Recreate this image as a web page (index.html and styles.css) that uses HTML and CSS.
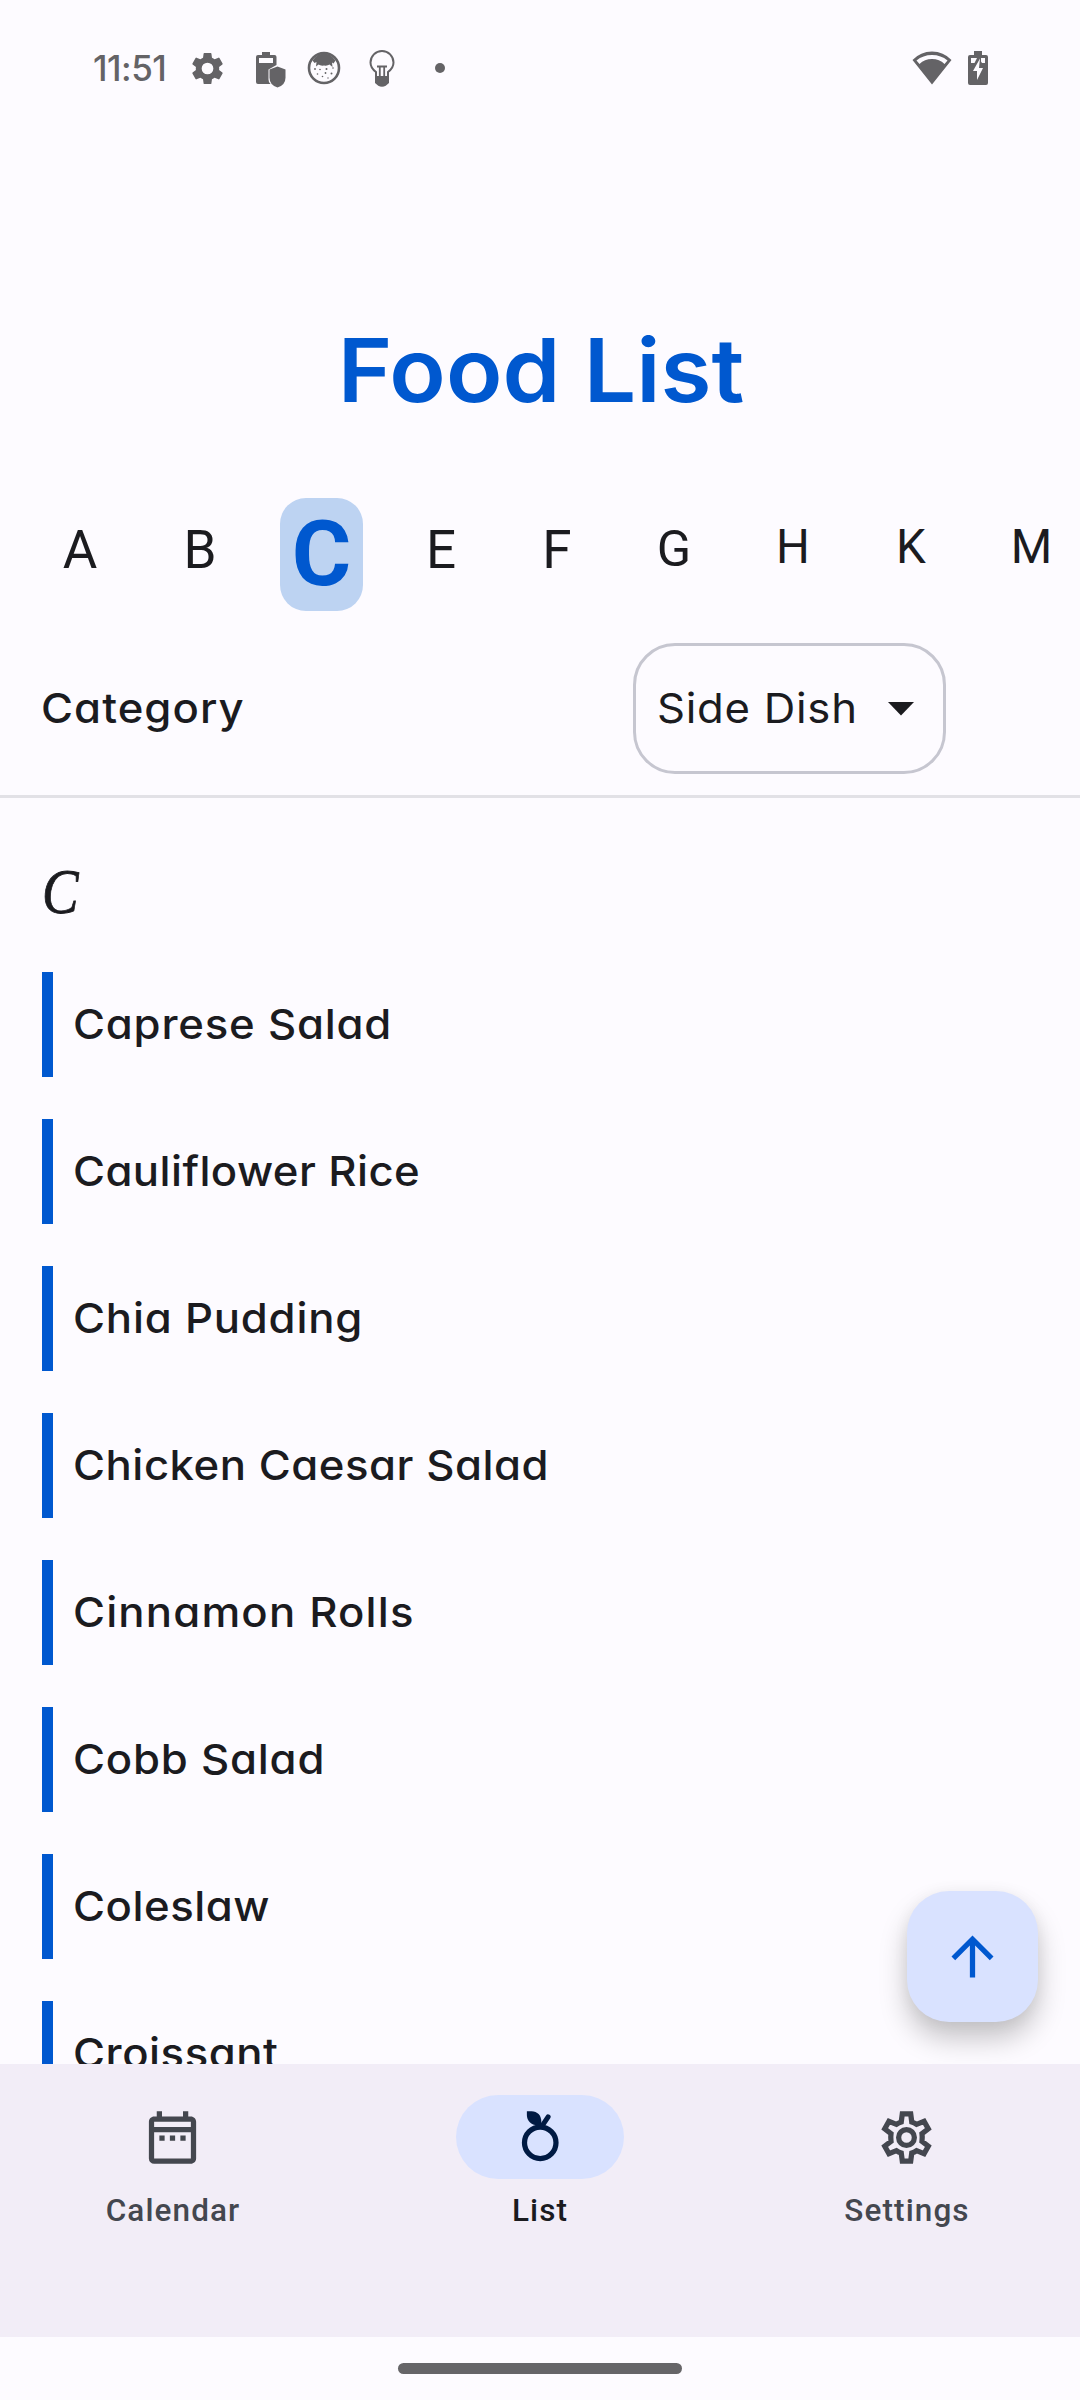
FILE: index.html
```html
<!DOCTYPE html>
<html lang="en">
<head>
<meta charset="utf-8">
<title>Food List</title>
<link rel="stylesheet" href="styles.css">
</head>
<body>
<div class="screen">
  <header class="status">
    <span class="time">11:51</span>
    <svg class="st-gear" width="39" height="39" viewBox="0 0 24 24"><path d="M19.14 12.94c.04-.3.06-.61.06-.94 0-.32-.02-.64-.07-.94l2.03-1.58a.49.49 0 0 0 .12-.61l-1.92-3.32a.49.49 0 0 0-.59-.22l-2.39.96c-.5-.38-1.03-.7-1.62-.94l-.36-2.54a.48.48 0 0 0-.48-.41h-3.84c-.24 0-.43.17-.47.41l-.36 2.54c-.59.24-1.13.57-1.62.94l-2.39-.96a.48.48 0 0 0-.59.22L2.74 8.87c-.12.21-.08.47.12.61l2.03 1.58c-.05.3-.09.63-.09.94s.02.64.07.94l-2.03 1.58a.49.49 0 0 0-.12.61l1.92 3.32c.12.22.37.29.59.22l2.39-.96c.5.38 1.03.7 1.62.94l.36 2.54c.05.24.24.41.48.41h3.84c.24 0 .44-.17.47-.41l.36-2.54c.59-.24 1.13-.56 1.62-.94l2.39.96c.22.08.47 0 .59-.22l1.92-3.32a.48.48 0 0 0-.12-.61l-2.01-1.58zM12 15.6a3.6 3.6 0 1 1 0-7.2 3.6 3.6 0 0 1 0 7.2z"/></svg>
    <svg class="st-shield" width="30" height="36" viewBox="0 0 30 36"><path fill-rule="evenodd" d="M6 0h8v3h4.500q2 0 2 2v8l-8 4.500v10q0 3 2 4.500H2q-2 0-2-2V5q0-2 2-2h4zM3 6v5h14V6z"/><path d="M21.500 14.500l8 3v8q0 7.500-8 10-8-2.500-8-10v-8z"/></svg>
    <svg class="st-face" width="34" height="34" viewBox="0 0 34 34"><circle cx="17" cy="17" r="15" fill="none" stroke="#646366" stroke-width="2.600"/><path d="M5.500 9.500Q10 2.500 17 2.500t11.500 7l-2 3-1.500-1 .500 4.500-3-2.500q-2 1.500-5.500 1-3.500.500-5.500-1L9 15.500l.500-4.500-2 1z"/><g><circle cx="8" cy="18" r=".9"/><circle cx="13" cy="18.500" r=".8"/><circle cx="19.500" cy="18" r="1"/><circle cx="26" cy="17" r=".8"/><circle cx="10.500" cy="23" r=".8"/><circle cx="15.500" cy="25.500" r=".8"/><circle cx="18.500" cy="22" r=".9"/><circle cx="24.500" cy="22.500" r="1"/><circle cx="21" cy="27" r=".7"/></g></svg>
    <svg class="st-bulb" width="26" height="37" viewBox="0 0 26 37"><path d="M7 26v-4Q1.500 18 1.500 12.500a11.500 11.500 0 0 1 23 0Q24.500 18 19 22v4" fill="none" stroke="#646366" stroke-width="2"/><path d="M6 26h14v7l-3 2.500q-4 2.500-8 0L6 33z"/><path d="M8 16.500h10M10.800 16.500V26M15.200 16.500V26" fill="none" stroke="#646366" stroke-width="1.800"/></svg>
    <span class="st-dot"></span>
    <svg class="st-wifi" width="40" height="34" viewBox="0 0 40 34"><path fill-rule="evenodd" d="M20 33.500L.5 9Q8.500.5 20 .5T39.500 9zM4.500 9.500l3 3.500Q12.500 8 20 8t12.500 5l3-3.500Q29 4 20 4T4.500 9.500z"/></svg>
    <svg class="st-batt" width="20" height="34" viewBox="0 0 20 34"><path fill-rule="evenodd" d="M6 0h8v4h4q2 0 2 2v26q0 2-2 2H2q-2 0-2-2V6q0-2 2-2h4zM3 7v5h3.500L9 7zM17 7h-4v3.500l1 1.500h3zM12 7.500L5 20h4v9l6-12h-4z"/></svg>
  </header>

  <h1 class="title">Food List</h1>

  <nav class="letters">
    <span class="letter wide">A</span>
    <span class="letter wide">B</span>
    <span class="letter current"><b class="chip">C</b></span>
    <span class="letter">E</span>
    <span class="letter narrow">F</span>
    <span class="letter mid">G</span>
    <span class="letter small">H</span>
    <span class="letter small">K</span>
    <span class="letter small wide">M</span>
  </nav>

  <div class="filter">
    <span class="filter-label">Category</span>
    <div class="select">
      <span class="select-value">Side Dish</span>
      <svg width="26" height="14" viewBox="0 0 26 14"><path d="M0 0h26L13 13.500z"/></svg>
    </div>
  </div>

  <main class="list">
    <h2 class="section">C</h2>
    <ul class="foods">
      <li class="food"><span class="name">Caprese Salad</span></li>
      <li class="food"><span class="name tight">Cauliflower Rice</span></li>
      <li class="food"><span class="name">Chia Pudding</span></li>
      <li class="food"><span class="name snug">Chicken Caesar Salad</span></li>
      <li class="food"><span class="name loose">Cinnamon Rolls</span></li>
      <li class="food"><span class="name">Cobb Salad</span></li>
      <li class="food"><span class="name snug">Coleslaw</span></li>
      <li class="food"><span class="name snug">Croissant</span></li>
    </ul>
    <button class="fab" aria-label="Scroll to top"><svg width="63" height="63" viewBox="0 0 24 24"><path d="M4 12l1.410 1.410L11 7.830V20h2V7.830l5.580 5.590L20 12l-8-8-8 8z"/></svg></button>
  </main>

  <nav class="tabs">
    <a class="tab">
      <span class="tab-icon"><svg width="63" height="63" viewBox="0 0 24 24"><path d="M19 4h-1V2h-2v2H8V2H6v2H5c-1.110 0-1.990.9-1.990 2L3 20a2 2 0 0 0 2 2h14c1.100 0 2-.9 2-2V6c0-1.100-.9-2-2-2zm0 16H5V10h14v10zm0-12H5V6h14v2zM9 13.200H7v-2h2v2zm4 0h-2v-2h2v2zm4 0h-2v-2h2v2z"/></svg></span>
      <span class="tab-label">Calendar</span>
    </a>
    <a class="tab selected">
      <span class="tab-icon"><svg width="63" height="63" viewBox="0 0 24 24"><circle cx="11.900" cy="14" r="6" fill="none" stroke="#001a43" stroke-width="2"/><path d="M6.800 2H8.600c2.200 0 3.700 1.600 3.700 3.800v1.500H10.700C8.500 7.300 6.800 5.600 6.800 3.400z"/><path d="M12.800 7.300L14.900 4.100" stroke="#001a43" stroke-width="1.900" stroke-linecap="round"/></svg></span>
      <span class="tab-label">List</span>
    </a>
    <a class="tab">
      <span class="tab-icon"><svg width="63" height="63" viewBox="0 0 24 24"><path fill="none" stroke="#44474f" stroke-width="2" d="M10.400 3h3.200l.4 3.050q.95.300 1.850.95l2.850-1.150 1.600 2.850-2.400 1.850q.2 1.450 0 2.900l2.400 1.850-1.600 2.850-2.850-1.150q-.9.650-1.850.95l-.4 3.050h-3.200l-.4-3.050q-.95-.300-1.850-.95l-2.850 1.150-1.600-2.850 2.400-1.850q-.2-1.450 0-2.900L3.700 8.700l1.600-2.850L8.150 7q.9-.650 1.850-.95z"/><circle cx="12" cy="12" r="3" fill="none" stroke="#44474f" stroke-width="2"/></svg></span>
      <span class="tab-label">Settings</span>
    </a>
  </nav>

  <footer class="gesture"><span class="handle"></span></footer>
</div>
</body>
</html>
```
FILE: styles.css
```css
* { box-sizing: border-box; margin: 0; padding: 0; }
body { background: #fdfbff; }
svg { display: block; flex: none; }

.screen {
  width: 1080px;
  height: 2400px;
  overflow: hidden;
  display: flex;
  flex-direction: column;
  background: #fdfbff;
  color: #1b1b1f;
  font-family: Inter, "Open Sans", sans-serif;
  font-feature-settings: "cv11" 1;
}

.status {
  height: 136px;
  flex: none;
  padding: 0 92px 0 93px;
  display: flex;
  align-items: center;
  fill: #646366;
  color: #646366;
}
.time { width: 95px; font-size: 35px; font-weight: 450; line-height: 40px; letter-spacing: -.5px; }
.st-shield { margin: 3px 0 0 29px; }
.st-face { margin-left: 21px; }
.st-bulb { margin-left: 28px; }
.st-dot { width: 10px; height: 10px; margin-left: 40px; border-radius: 50%; background: #646366; }
.st-wifi { margin-left: auto; }
.st-batt { margin-left: 16px; }

.title {
  height: 362px;
  flex: none;
  padding: 179px 0 0 2px;
  text-align: center;
  font-size: 88px;
  font-weight: 640;
  line-height: 110px;
  transform: scaleX(1.055);
  color: #0058cf;
}

.letters {
  height: 113px;
  flex: none;
  padding-left: 20px;
  display: flex;
}
.letter {
  width: 118px;
  flex: none;
  padding-top: 26px;
  text-align: center;
  font: 400 53px/1 Roboto, sans-serif;
}
.wide { width: 120px; }
.narrow { width: 114px; }
.mid { width: 120px; font-size: 50.500px; }
.small { width: 118px; font-size: 47.500px; }
.small.wide { width: 123px; }
.current { width: 122px; padding: 0 19px 0 20px; }
.chip {
  display: block;
  height: 113px;
  border-radius: 26px;
  background: #bdd3f2;
  color: #0058cf;
  font-size: 91px;
  font-weight: 700;
  line-height: 113px;
}

.filter {
  height: 187px;
  flex: none;
  padding: 32px 134px 21px 41px;
  display: flex;
  align-items: center;
  justify-content: space-between;
  border-bottom: 3px solid #e2e1e6;
}
.filter-label, .select-value, .name {
  padding-bottom: 2px;
  transform: scaleX(1.065);
  transform-origin: left;
  font-size: 41px;
  font-weight: 500;
}
.filter-label { letter-spacing: 1px; }
.select {
  width: 313px;
  height: 131px;
  padding: 0 29px 0 21px;
  display: flex;
  align-items: center;
  justify-content: space-between;
  border: 3px solid #c6c6d0;
  border-radius: 42px;
  fill: #1b1b1f;
}
.select-value { font-weight: 400; letter-spacing: .7px; }

.list {
  position: relative;
  height: 1266px;
  flex: none;
  overflow: hidden;
  padding: 59px 42px 0;
}
.section {
  height: 115px;
  width: 60px;
  font: italic 400 63px/70px "Liberation Serif", serif;
  -webkit-text-stroke: .8px #1b1b1f;
  transform: scaleX(.87);
  transform-origin: left;
}
.foods { display: flex; flex-direction: column; gap: 42px; list-style: none; }
.food {
  height: 105px;
  padding-left: 20px;
  display: flex;
  align-items: center;
  border-left: 11px solid #0058cf;
}
.name { letter-spacing: .75px; white-space: nowrap; }
.snug { letter-spacing: .5px; }
.tight { letter-spacing: .4px; }
.loose { letter-spacing: 1.100px; }
.fab {
  position: absolute;
  right: 42px;
  bottom: 42px;
  width: 131px;
  height: 131px;
  display: flex;
  align-items: center;
  justify-content: center;
  border: 0;
  border-radius: 42px;
  background: #d9e2ff;
  fill: #0058cf;
  box-shadow: 0 17px 28px rgba(0, 0, 0, .22), 0 2px 16px rgba(0, 0, 0, .05);
}

.tabs {
  height: 273px;
  flex: none;
  padding-top: 31px;
  display: flex;
  gap: 21px;
  background: #f2edf7;
  color: #44474f;
  fill: #44474f;
}
.tab { flex: 1; display: flex; flex-direction: column; align-items: center; }
.tab-icon {
  width: 168px;
  height: 84px;
  padding-right: 2px;
  display: flex;
  align-items: center;
  justify-content: center;
  border-radius: 42px;
}
.tab-label { margin-top: 11px; font: 500 31.500px/42px Roboto, sans-serif; letter-spacing: 1.100px; }
.selected { color: #1b1b1f; fill: #001a43; }
.selected .tab-icon { padding: 0; background: #d9e2ff; }

.gesture { flex: 1; padding-top: 26px; display: flex; justify-content: center; align-items: flex-start; }
.handle { width: 284px; height: 11px; border-radius: 6px; background: #666568; }
```
